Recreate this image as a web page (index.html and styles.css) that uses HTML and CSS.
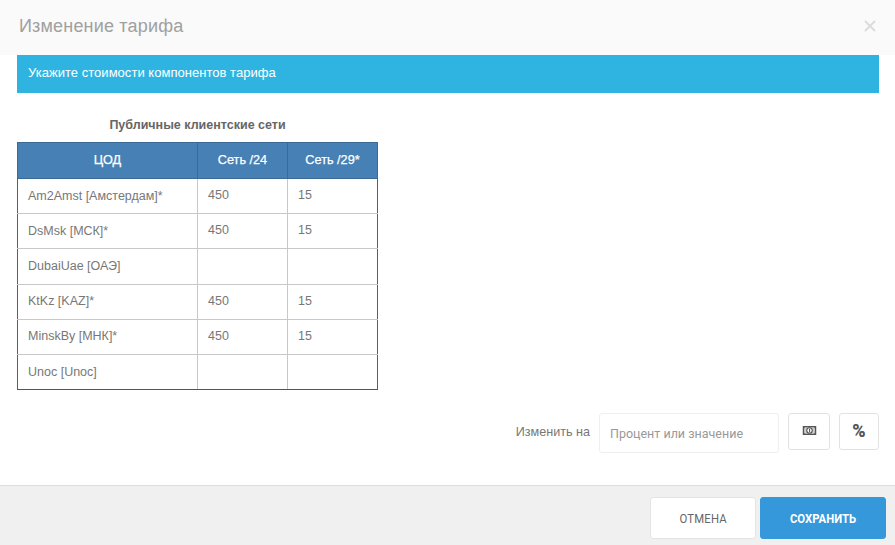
FILE: index.html
```html
<!DOCTYPE html>
<html lang="ru">
<head>
<meta charset="utf-8">
<title>Изменение тарифа</title>
<link rel="stylesheet" href="styles.css">
</head>
<body>
<div class="modal">
  <header class="modal-header">
    <h1 class="modal-title">Изменение тарифа</h1>
    <svg class="close" viewBox="0 0 12 12" width="12" height="12"><path d="M1 1 11 11M11 1 1 11" stroke="#dcdcdc" stroke-width="2" fill="none"/></svg>
  </header>
  <main class="modal-body">
    <div class="alert">Укажите стоимости компонентов тарифа</div>
    <div class="table-block">
      <div class="table-caption">Публичные клиентские сети</div>
      <table class="prices">
        <thead>
          <tr><th class="col-a">ЦОД</th><th class="col-b">Сеть /24</th><th class="col-c">Сеть /29*</th></tr>
        </thead>
        <tbody>
          <tr><td>Am2Amst [Амстердам]*</td><td class="num">450</td><td class="num">15</td></tr>
          <tr><td>DsMsk [МСК]*</td><td class="num">450</td><td class="num">15</td></tr>
          <tr><td>DubaiUae [ОАЭ]</td><td class="num"></td><td class="num"></td></tr>
          <tr><td>KtKz [KAZ]*</td><td class="num">450</td><td class="num">15</td></tr>
          <tr><td>MinskBy [МНК]*</td><td class="num">450</td><td class="num">15</td></tr>
          <tr><td>Unoc [Unoc]</td><td class="num"></td><td class="num"></td></tr>
        </tbody>
      </table>
    </div>
    <div class="change-row">
      <label class="change-label" for="chg">Изменить на</label>
      <input class="change-input" id="chg" type="text" placeholder="Процент или значение">
      <button class="icon-btn money" type="button" aria-label="Значение">
        <svg viewBox="0 0 15 10" width="15" height="9"><path fill="#555" d="M0 0H15V10H0Z"/><path fill="#ccc" d="M2.5 1.5H12.5L13.5 2.5V7.5L12.5 8.5H2.5L1.5 7.5V2.5Z"/><circle cx="7.5" cy="5" r="3.6" fill="#555"/><circle cx="7.5" cy="5" r="2.4" fill="#fff"/><path fill="#555" d="M7 3H8.2V7H7Z"/></svg>
      </button>
      <button class="icon-btn pct" type="button">%</button>
    </div>
  </main>
  <footer class="modal-footer">
    <button class="btn btn-cancel" type="button"><span>ОТМЕНА</span></button>
    <button class="btn btn-save" type="button"><span>СОХРАНИТЬ</span></button>
  </footer>
</div>
</body>
</html>
```
FILE: styles.css
```css
* { box-sizing: border-box; }
html, body { margin: 0; height: 100%; }
body { font-family: "Liberation Sans", Arial, sans-serif; color: #777; background: #fff; overflow: hidden; }
.modal { width: 895px; height: 545px; display: flex; flex-direction: column; }
.modal-header { height: 55px; flex: none; background: #fafafa; display: flex; align-items: center; justify-content: space-between; padding: 0 19px 3px; }
.modal-title { margin: 0; font-size: 18px; font-weight: 400; color: #a0a0a0; letter-spacing: 0.18px; }
.close { display: block; }
.modal-body { flex: 1; padding: 0 16px 0 17px; display: flex; flex-direction: column; }
.alert { height: 38px; flex: none; background: #2fb4e2; color: #fff; font-size: 13px; line-height: 36px; padding-left: 11px; letter-spacing: 0.03px; }
.table-block { width: 361px; margin-top: 22px; }
.table-caption { font-size: 12.5px; font-weight: 700; color: #666; text-align: center; line-height: 20px; height: 27px; }
.prices { width: 360px; margin-left: 0; border-collapse: collapse; table-layout: fixed; font-size: 12.5px; border: 1px solid #41668a; }
.prices th { height: 36px; background: #4680b4; color: #fff; font-size: 12.7px; font-weight: 400; border: 1px solid #3b6a94; padding: 0 0 1px; -webkit-text-stroke: 0.25px #fff; }
.col-a { width: 180px; }
.col-b { width: 90px; }
.col-c { width: 90px; }
.prices td { height: 35.2px; padding: 0 10px 1px; border: 1px solid #c8c8c8; color: #777; }
.prices tr td:first-child { border-left-color: #41668a; }
.prices tr td:last-child { border-right-color: #41668a; }
.prices tbody tr:last-child td { border-bottom-color: #3f5a76; }
.prices .num { vertical-align: top; padding-top: 9px; }
.change-row { display: flex; align-items: flex-start; justify-content: flex-end; margin-top: 23px; }
.change-label { font-size: 12.6px; line-height: 38px; color: #777; margin-right: 9px; }
.change-input { width: 180px; height: 40px; border: 1px solid #eee; border-radius: 3px; padding: 0 10px; font: 12.5px "Roboto", sans-serif; color: #777; outline: none; }
.change-input::placeholder { color: #999; opacity: 1; }
.icon-btn { height: 37px; background: #fff; border: 1px solid #e2e2e2; border-radius: 3px; padding: 0; display: flex; align-items: center; justify-content: center; }
.money { width: 42px; margin-left: 9px; padding-bottom: 3px; }
.pct { width: 40px; margin-left: 9px; font: 900 18px "Roboto", sans-serif; color: #555; padding-bottom: 3px; }
.modal-footer { height: 60px; flex: none; background: #f0f0f0; border-top: 1px solid #ddd; display: flex; justify-content: flex-end; align-items: flex-start; gap: 4px; padding: 11px 9px 0 0; }
.btn { height: 42px; border-radius: 3px; font: 400 13px "Roboto", sans-serif; padding: 0; }
.btn span { display: inline-block; transform: scaleX(0.87); }
.btn-cancel { width: 106px; background: #fff; border: 1px solid #e4e4e4; color: #666; letter-spacing: 0.2px; }
.btn-save { width: 126px; background: #3498db; border: 1px solid #3498db; color: #fff; font-weight: 700; }
```
